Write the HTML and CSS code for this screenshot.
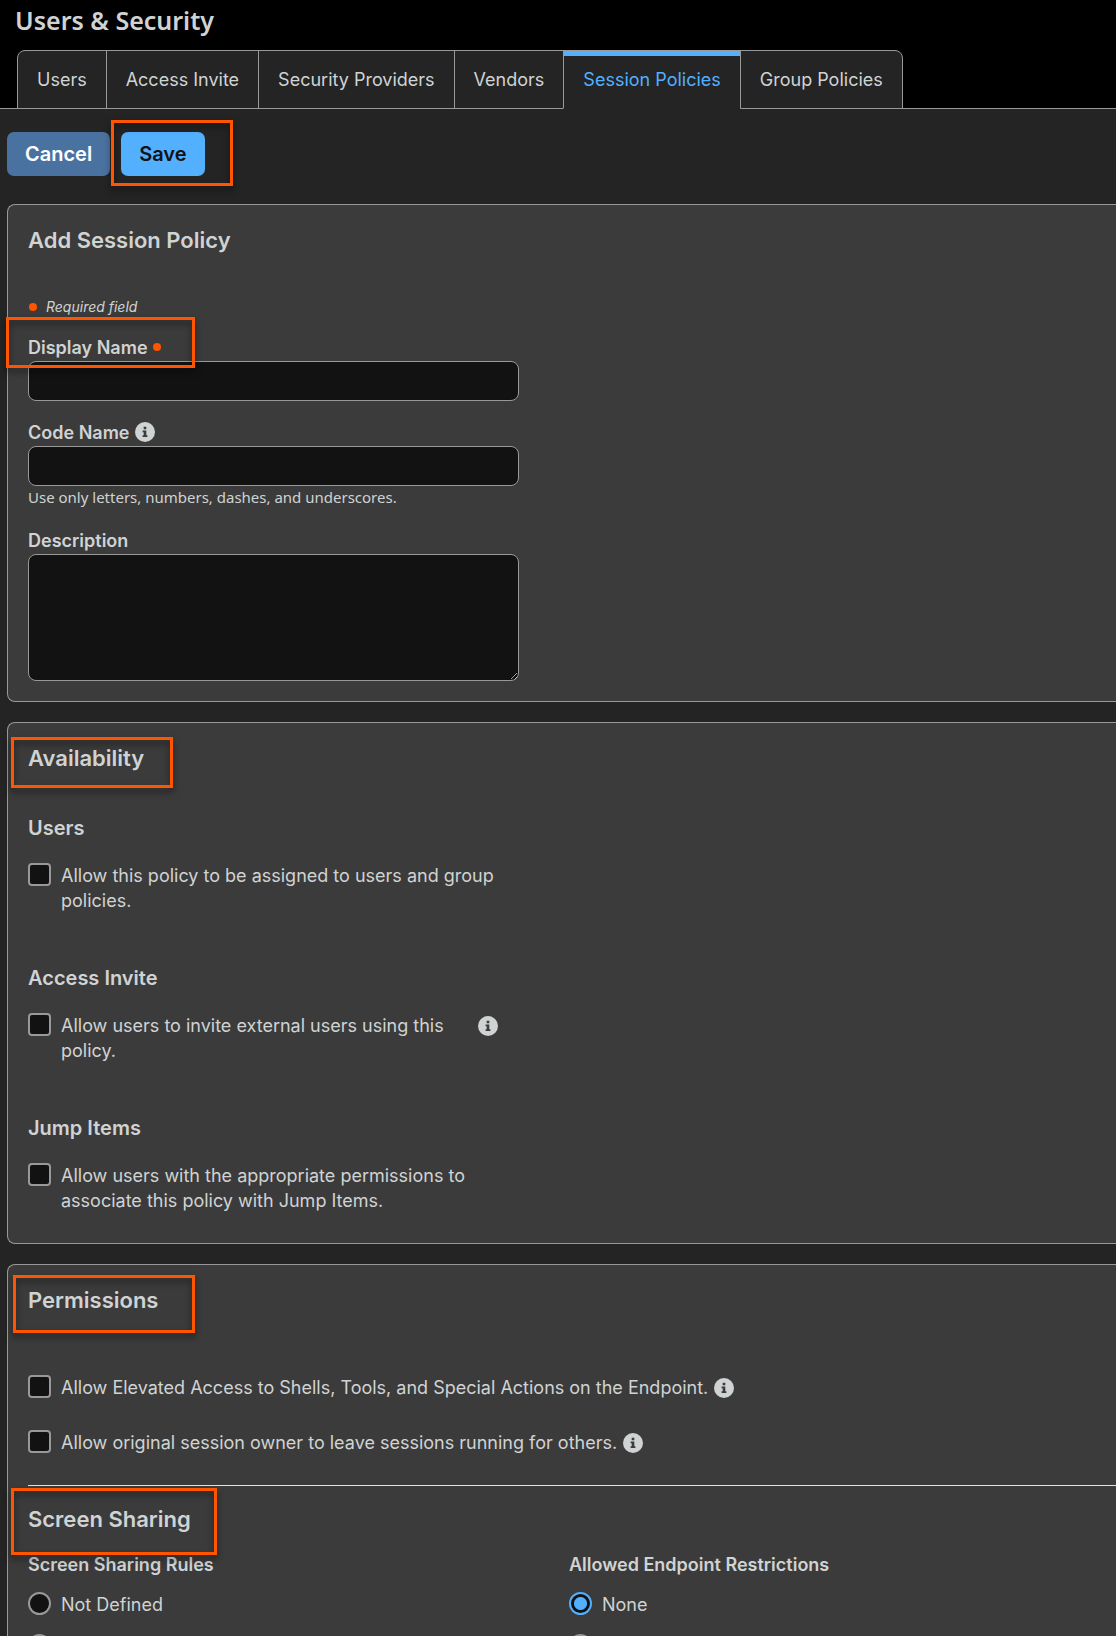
FILE: index.html
```html
<!DOCTYPE html>
<html lang="en">
<head>
    <meta charset="UTF-8">
    <meta name="viewport" content="width=device-width, initial-scale=1.0">
    <title>Users &amp; Security</title>
    <link rel="stylesheet" href="styles.css">
</head>
<body>

<svg class="defs" aria-hidden="true">
    <symbol id="info" viewBox="0 0 20 20">
        <circle cx="10" cy="10" r="10" fill="#d0d3d3"/>
        <path fill="#3b3b3b" d="M8.7 4.8h2.6v2.5H8.7zM7.6 8.5h3.7v4.7h1.1v1.7H7.6v-1.7h1.1v-3H7.6z"/>
    </symbol>
</svg>

<header class="page-header">
    <h1>Users &amp; Security</h1>
    <nav class="tabs">
        <a class="tab" href="#">Users</a>
        <a class="tab" href="#">Access Invite</a>
        <a class="tab" href="#">Security Providers</a>
        <a class="tab" href="#">Vendors</a>
        <a class="tab active" href="#">Session Policies</a>
        <a class="tab" href="#">Group Policies</a>
    </nav>
</header>

<main>
    <div class="actions">
        <button type="button" class="btn cancel">Cancel</button>
        <div class="marked">
            <button type="button" class="btn save">Save</button>
            <span class="mark mark-save"></span>
        </div>
    </div>

    <section class="card">
        <h2>Add Session Policy</h2>
        <p class="required"><span class="dot"></span>Required field</p>

        <div class="field marked">
            <label for="displayName">Display Name <span class="dot"></span></label>
            <input type="text" id="displayName">
            <span class="mark mark-name"></span>
        </div>
        <div class="field">
            <label for="codeName">Code Name <svg class="info"><use href="#info"/></svg></label>
            <input type="text" id="codeName">
            <p class="hint">Use only letters, numbers, dashes, and underscores.</p>
        </div>
        <div class="field">
            <label for="description">Description</label>
            <textarea id="description"></textarea>
        </div>
    </section>

    <section class="card">
        <div class="marked">
            <h2>Availability</h2>
            <span class="mark mark-availability"></span>
        </div>
        <div class="group">
            <h3>Users</h3>
            <div class="option">
                <input type="checkbox" id="allowUsers">
                <label for="allowUsers">Allow this policy to be assigned to users and group policies.</label>
            </div>
        </div>
        <div class="group">
            <h3>Access Invite</h3>
            <div class="option with-info">
                <input type="checkbox" id="allowInvite">
                <label for="allowInvite">Allow users to invite external users using this policy.</label>
                <svg class="info"><use href="#info"/></svg>
            </div>
        </div>
        <div class="group">
            <h3>Jump Items</h3>
            <div class="option">
                <input type="checkbox" id="allowJump">
                <label for="allowJump">Allow users with the appropriate permissions to associate this policy with Jump Items.</label>
            </div>
        </div>
    </section>

    <section class="card permissions">
        <div class="marked">
            <h2>Permissions</h2>
            <span class="mark mark-permissions"></span>
        </div>
        <div class="options">
            <div class="option">
                <input type="checkbox" id="elevated">
                <label for="elevated">Allow Elevated Access to Shells, Tools, and Special Actions on the Endpoint.</label>
                <svg class="info"><use href="#info"/></svg>
            </div>
            <div class="option">
                <input type="checkbox" id="leaveRunning">
                <label for="leaveRunning">Allow original session owner to leave sessions running for others.</label>
                <svg class="info"><use href="#info"/></svg>
            </div>
        </div>
        <div class="screen-sharing marked">
            <h2>Screen Sharing</h2>
            <span class="mark mark-sharing"></span>
            <div class="columns">
                <div class="radio-group" role="radiogroup" aria-labelledby="rulesTitle">
                    <h4 id="rulesTitle">Screen Sharing Rules</h4>
                    <div class="option">
                        <input type="radio" name="rules" id="rulesUndefined">
                        <label for="rulesUndefined">Not Defined</label>
                    </div>
                    <div class="option">
                        <input type="radio" name="rules" aria-label="Rule">
                    </div>
                </div>
                <div class="radio-group" role="radiogroup" aria-labelledby="restrictionsTitle">
                    <h4 id="restrictionsTitle">Allowed Endpoint Restrictions</h4>
                    <div class="option">
                        <input type="radio" name="restrictions" id="restrictionsNone" checked>
                        <label for="restrictionsNone">None</label>
                    </div>
                    <div class="option">
                        <input type="radio" name="restrictions" aria-label="Restriction">
                    </div>
                </div>
            </div>
        </div>
    </section>
</main>

</body>
</html>
```
FILE: styles.css
```css
* {
    box-sizing: border-box;
}
body {
    margin: 0;
    height: 100vh;
    display: flex;
    flex-direction: column;
    overflow: hidden;
    background-color: #242424;
    color: #d0d3d3;
    font-family: Inter, "Liberation Sans", sans-serif;
    font-size: 18px;
    line-height: 25px;
}
h1, h2, h3, h4, p {
    margin: 0;
    font-weight: 600;
}
.defs {
    position: absolute;
    width: 0;
    height: 0;
}

/* header and tabs */
.page-header {
    flex: none;
    background-color: #000;
    border-bottom: 1px solid #999;
}
h1 {
    padding: 4px 15px 14px;
    font-family: "Noto Sans", sans-serif;
    font-size: 25px;
    line-height: 32px;
}
.tabs {
    display: flex;
    padding-left: 17px;
    margin-bottom: -1px;
}
.tab {
    height: 59px;
    padding: 16px 19px 0;
    margin-right: -1px;
    border: 1px solid #999;
    background-color: #242424;
    color: #d0d3d3;
    text-decoration: none;
}
.tab:first-child {
    border-top-left-radius: 8px;
}
.tab:last-child {
    border-top-right-radius: 8px;
}
.tab.active {
    border-bottom-color: #242424;
    box-shadow: inset 0 5px #52b0ff;
    color: #52b0ff;
}

/* content */
main {
    flex: 1;
    min-height: 0;
    overflow: hidden;
    padding: 23px 0 0 7px;
}
.actions {
    display: flex;
    gap: 11px;
    margin-bottom: 28px;
}
.btn {
    display: block;
    height: 44px;
    padding: 0 18px;
    border: none;
    border-radius: 7px;
    font: 600 20px Inter, sans-serif;
}
.cancel {
    background-color: #4a72a0;
    color: #fff;
}
.save {
    background-color: #52b0ff;
    color: #121212;
}
.card {
    margin-bottom: 20px;
    padding: 20px;
    border: 1px solid #999;
    border-right: none;
    border-radius: 8px 0 0 8px;
    background-color: #3b3b3b;
}
h2 {
    font-size: 22px;
    line-height: 30px;
}
h3 {
    font-size: 20px;
    line-height: 26px;
    margin-bottom: 22px;
}
h4 {
    font-size: 18px;
    line-height: 24px;
    margin-bottom: 15px;
}
.required {
    display: flex;
    align-items: center;
    gap: 9px;
    margin: 42px 0 19px;
    padding-left: 1px;
    font-size: 14px;
    font-style: italic;
    font-weight: 400;
    line-height: 20px;
}
.dot {
    display: inline-block;
    width: 8px;
    height: 8px;
    border-radius: 50%;
    background-color: #ff5500;
}
.info {
    flex: none;
    width: 20px;
    height: 20px;
}

/* text fields */
.field {
    max-width: 491px;
}
.field + .field {
    margin-top: 20px;
}
.field label {
    display: flex;
    align-items: center;
    gap: 5px;
    height: 25px;
    padding-bottom: 3px;
    font-weight: 600;
}
.field input, .field textarea {
    display: block;
    width: 100%;
    height: 40px;
    border: 1px solid #999;
    border-radius: 8px;
    background-color: #121212;
    color: #d0d3d3;
    font: inherit;
}
.field textarea {
    height: 127px;
    resize: vertical;
    color-scheme: dark;
}
.hint {
    padding: 1px 0 2px;
    font-family: "Noto Sans", sans-serif;
    font-size: 15px;
    font-weight: 400;
    line-height: 20px;
}

/* check boxes and radios */
.group {
    display: flow-root;
    max-width: 491px;
    margin-top: 42px;
}
.option {
    display: flex;
    align-items: flex-start;
    gap: 10px;
    margin-bottom: 10px;
}
.option input {
    appearance: none;
    flex: none;
    width: 23px;
    height: 23px;
    margin: 0;
    border: 2px solid #999;
    border-radius: 4px;
    background-color: #121212;
}
.option input[type="radio"] {
    border-radius: 50%;
}
.option input[type="radio"]:checked {
    border-color: #52b0ff;
    background-image: radial-gradient(circle, #52b0ff 6px, transparent 7px);
}
.option .info {
    margin-top: 3px;
}
.with-info {
    padding-right: 21px;
}
.with-info label {
    flex: 1;
}
.options {
    margin-top: 60px;
}
.options .option {
    margin-bottom: 30px;
}
.options .info {
    margin-left: -4px;
}
.permissions {
    padding-bottom: 0;
}
.screen-sharing {
    padding-top: 18px;
    border-top: 1px solid #e2e2e2;
    margin-right: -20px;
}
.columns {
    display: flex;
    margin-top: 19px;
}
.radio-group {
    flex: 0 0 541px;
}
.radio-group .option {
    margin-bottom: 17px;
}

/* highlight frames over the content */
.marked {
    position: relative;
}
.mark {
    position: absolute;
    border: 3px solid #ff5500;
    filter: drop-shadow(0 4px 3px rgba(0, 0, 0, 0.5));
    pointer-events: none;
}
.mark-save {
    left: -10px;
    top: -12px;
    width: 122px;
    height: 66px;
}
.mark-name {
    left: -22px;
    top: -19px;
    width: 189px;
    height: 51px;
}
.mark-availability {
    left: -17px;
    top: -6px;
    width: 162px;
    height: 51px;
}
.mark-permissions {
    left: -15px;
    top: -10px;
    width: 182px;
    height: 58px;
}
.mark-sharing {
    left: -17px;
    top: 2px;
    width: 206px;
    height: 67px;
}
```
